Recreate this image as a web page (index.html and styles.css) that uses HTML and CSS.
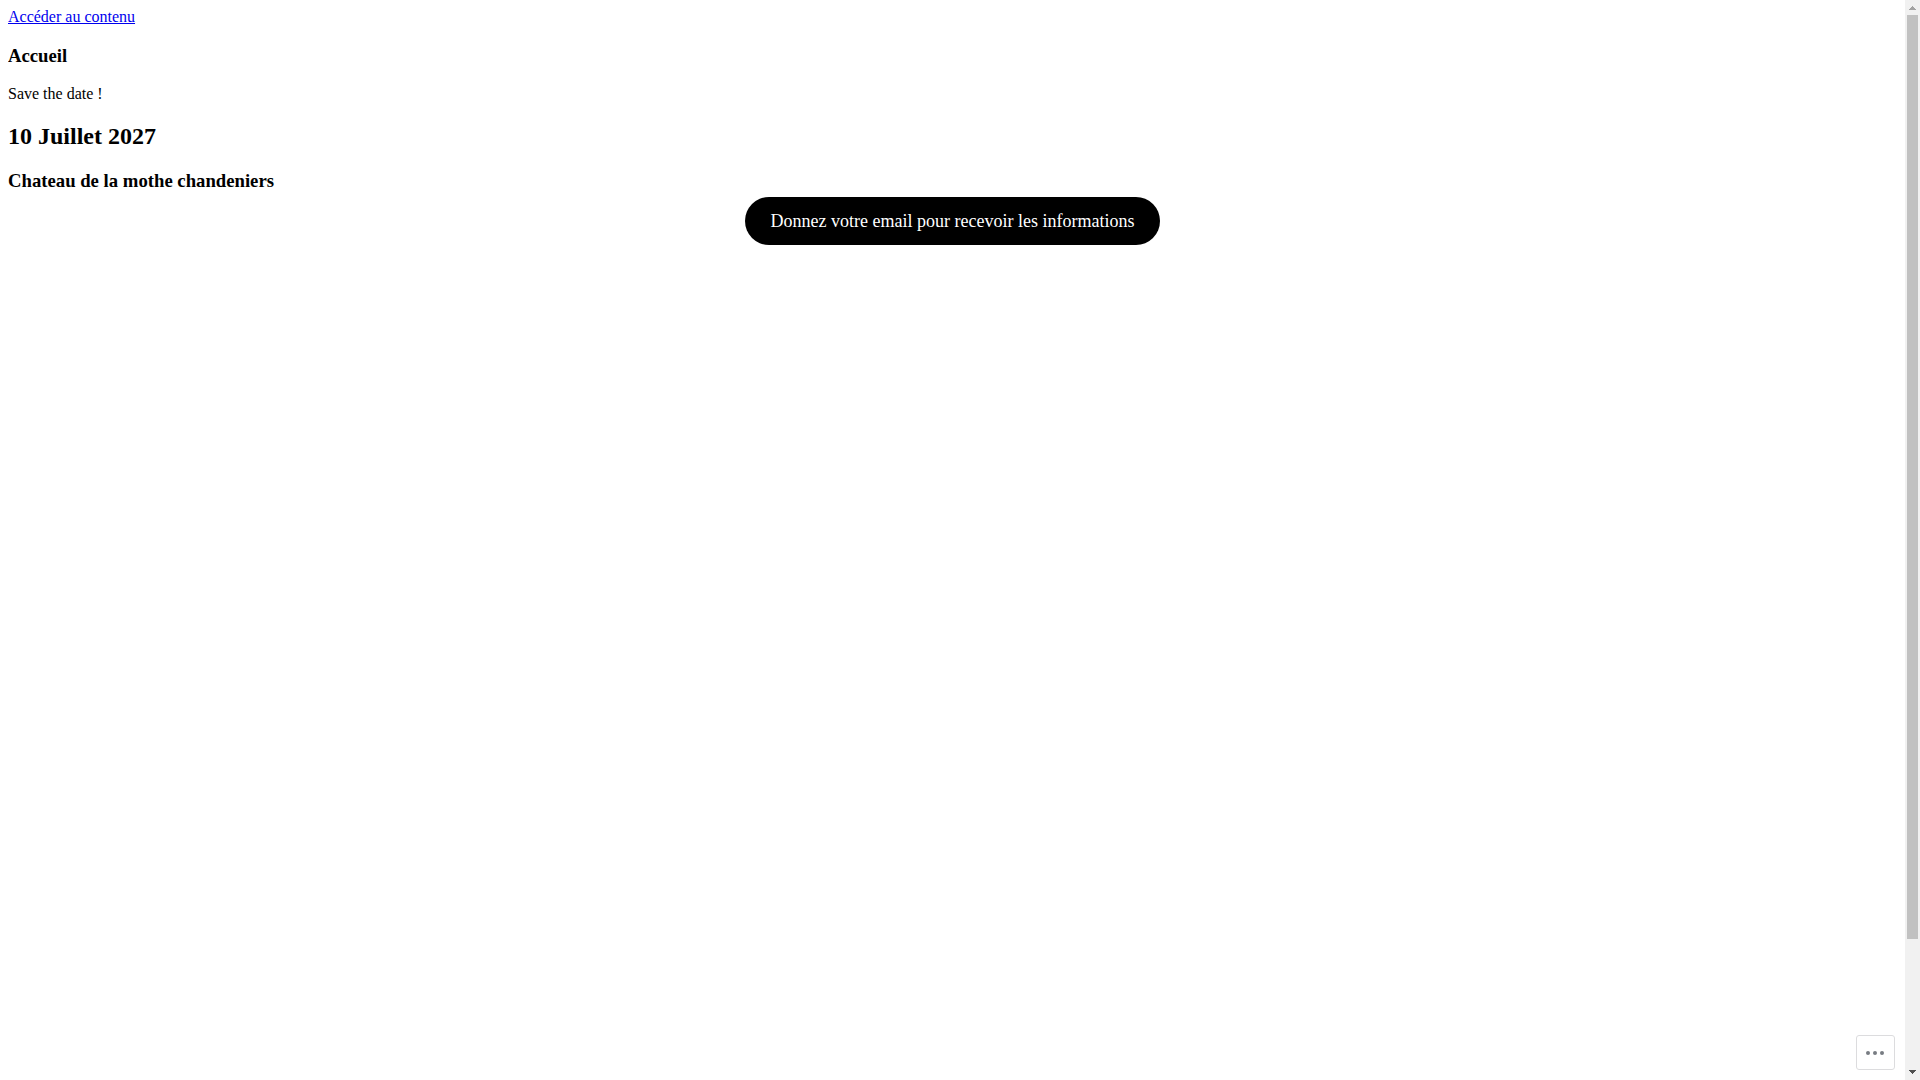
FILE: index.html
```html
<!DOCTYPE html>
<html lang="fr">
<head>
<meta charset="utf-8">
<title>Accueil</title>
<link rel="stylesheet" href="styles.css">
</head>
<body>
<a class="skip-link" href="#contenu">Accéder au contenu</a>
<main id="contenu">
  <h3>Accueil</h3>
  <p>Save the date !</p>
  <h2>10 Juillet 2027</h2>
  <h3 class="place">Chateau de la mothe chandeniers</h3>
  <div class="actions">
    <a class="cta" href="#email">Donnez votre email pour recevoir les informations</a>
  </div>
</main>
<button class="more" type="button" aria-label="Plus">
  <svg width="18" height="4" viewBox="0 0 18 4" fill="#787c82" aria-hidden="true"><circle cx="2" cy="2" r="2"/><circle cx="9" cy="2" r="2"/><circle cx="16" cy="2" r="2"/></svg>
</button>
<div class="scrollbar" aria-hidden="true">
  <svg class="arrow" width="15" height="15" viewBox="0 0 15 15" fill="#a3a3a3" shape-rendering="crispEdges"><path d="M7 6h1v1h1v1h1v1h1v1H4V9h1V8h1V7h1z"/></svg>
  <div class="track"><div class="thumb"></div></div>
  <svg class="arrow" width="15" height="15" viewBox="0 0 15 15" fill="#505050" shape-rendering="crispEdges"><path d="M4 5h7v1h-1v1H9v1H8v1H7V8H6V7H5V6H4z"/></svg>
</div>
</body>
</html>
```

FILE: styles.css
```css
body {
  margin: 8px 23px 8px 8px;
  background: #fff;
  color: #000;
  font-family: "Liberation Serif", "Times New Roman", serif;
  font-size: 16px;
}

.skip-link {
  color: #0000ee;
}

.place {
  margin-bottom: 5px;
}

.actions {
  display: flex;
  justify-content: center;
}

.cta {
  padding: 14px 26px;
  border-radius: 24px;
  background: #000;
  color: #fff;
  font-size: 18px;
  line-height: 20px;
  text-decoration: none;
}

.more {
  position: fixed;
  right: 25px;
  bottom: 10px;
  display: flex;
  align-items: center;
  justify-content: center;
  width: 39px;
  height: 35px;
  padding: 0 2px 0 0;
  border: 1px solid #dcdcde;
  border-radius: 3px;
  background: #fff;
}

.scrollbar {
  position: fixed;
  top: 0;
  right: 0;
  bottom: 0;
  display: flex;
  flex-direction: column;
  width: 15px;
  background: #f1f1f1;
}

.arrow {
  display: block;
  flex: none;
}

.track {
  flex: 1;
  padding: 0 2px;
}

.thumb {
  height: 88%;
  background: #c1c1c1;
}
```
